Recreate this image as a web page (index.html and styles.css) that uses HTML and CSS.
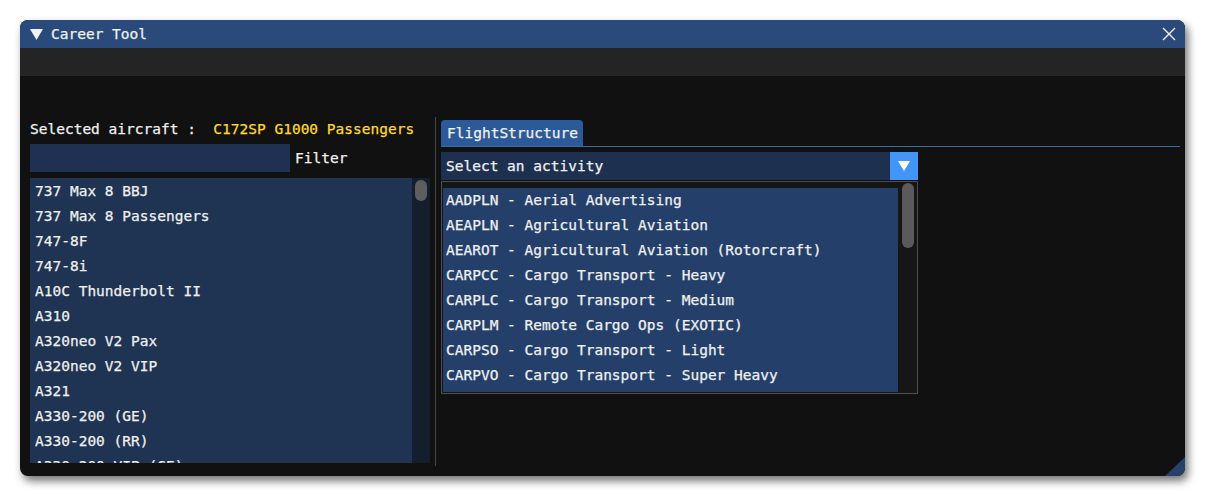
FILE: index.html
```html
<!DOCTYPE html>
<html lang="en">
  <head>
    <meta charset="UTF-8" />
    <title>Career Tool</title>
    <link rel="stylesheet" href="styles.css">
  </head>
  <body>
    <div class="window">
      <!-- Title bar -->
      <div class="titlebar">
        <svg class="collapse" width="13" height="11" viewBox="0 0 13 11"><polygon points="0,0 13,0 6.5,11" fill="#f2f2f2"/></svg>
        <span class="title">Career Tool</span>
        <svg class="close" width="14" height="14" viewBox="0 0 14 14"><path d="M1 1 L13 13 M13 1 L1 13" stroke="#f2f2f2" stroke-width="1.4" fill="none"/></svg>
      </div>
      <div class="menubar"></div>

      <div class="content">
        <!-- Aircraft selection -->
        <div class="left">
          <div class="selected">Selected aircraft :  <span class="value">C172SP G1000 Passengers</span></div>
          <div class="filter-row">
            <div class="filter-input"></div>
            <span class="filter-label">Filter</span>
          </div>
          <div class="aircraft-list">
            <div class="rows">
              <div class="row">737 Max 8 BBJ</div>
              <div class="row">737 Max 8 Passengers</div>
              <div class="row">747-8F</div>
              <div class="row">747-8i</div>
              <div class="row">A10C Thunderbolt II</div>
              <div class="row">A310</div>
              <div class="row">A320neo V2 Pax</div>
              <div class="row">A320neo V2 VIP</div>
              <div class="row">A321</div>
              <div class="row">A330-200 (GE)</div>
              <div class="row">A330-200 (RR)</div>
              <div class="row">A330-200 VIP (GE)</div>
            </div>
            <div class="scrollbar"><div class="thumb"></div></div>
          </div>
        </div>

        <div class="separator"></div>

        <!-- Flight structure -->
        <div class="right">
          <div class="tabbar">
            <div class="tab">FlightStructure</div>
          </div>
          <div class="combo">
            <span class="combo-text">Select an activity</span>
            <div class="combo-arrow">
              <svg width="12" height="10" viewBox="0 0 12 10"><polygon points="0,0 12,0 6,10" fill="#ffffff"/></svg>
            </div>
          </div>
          <div class="popup">
            <div class="popup-list">
              <div class="row">AADPLN - Aerial Advertising</div>
              <div class="row">AEAPLN - Agricultural Aviation</div>
              <div class="row">AEAROT - Agricultural Aviation (Rotorcraft)</div>
              <div class="row">CARPCC - Cargo Transport - Heavy</div>
              <div class="row">CARPLC - Cargo Transport - Medium</div>
              <div class="row">CARPLM - Remote Cargo Ops (EXOTIC)</div>
              <div class="row">CARPSO - Cargo Transport - Light</div>
              <div class="row">CARPVO - Cargo Transport - Super Heavy</div>
              <div class="row">CARROT - Cargo Transport (Rotorcraft)</div>
            </div>
            <div class="popup-scroll"><div class="thumb"></div></div>
          </div>
        </div>
      </div>

      <div class="grip"></div>
    </div>
  </body>
</html>
```

FILE: styles.css
```css
/* Page */
body {
  margin: 0;
  padding: 20px;
  background: #ffffff;
  font-family: "DejaVu Sans Mono", "Liberation Mono", monospace;
  font-size: 14.5px;
  color: #f0f0f0;
  -webkit-text-stroke: 0.25px;
}

/* Window frame */
.window {
  position: relative;
  width: 1165px;
  height: 456px;
  background: #111111;
  border-radius: 8px;
  overflow: hidden;
  display: flex;
  flex-direction: column;
  box-shadow: 3px 5px 8px rgba(0, 0, 0, 0.55);
}

.titlebar {
  height: 28px;
  background: #294a7a;
  display: flex;
  align-items: center;
  padding: 0 9px 0 10px;
}

.collapse {
  margin-right: 8px;
}

.title {
  flex: 1;
  white-space: pre;
}

.menubar {
  height: 28px;
  background: #242424;
}

/* Content */
.content {
  flex: 1;
  display: flex;
  padding: 41px 5px 13px 10px;
  min-height: 0;
}

.left {
  width: 400px;
  display: flex;
  flex-direction: column;
}

.selected {
  height: 24px;
  line-height: 24px;
  white-space: pre;
}

.value {
  color: #ffd92a;
}

.filter-row {
  margin-top: 3px;
  display: flex;
  align-items: center;
  height: 28px;
}

.filter-input {
  width: 260px;
  height: 28px;
  background: #1e3152;
}

.filter-label {
  margin-left: 5px;
}

.aircraft-list {
  margin-top: 6px;
  flex: 1;
  display: flex;
  background: #1f3352;
  overflow: hidden;
}

.rows {
  flex: 1;
  padding: 1px 0 0 5px;
}

.row {
  height: 25px;
  line-height: 25px;
  white-space: pre;
}

.scrollbar {
  width: 18px;
  background: #141e2c;
  padding: 2px 3px;
  box-sizing: border-box;
}

.scrollbar .thumb {
  height: 21px;
  background: #5e5e5e;
  border-radius: 6px;
}

.separator {
  width: 1px;
  margin: 0 5px -3px;
  background: #474747;
}

/* Right column */
.right {
  flex: 1;
  display: flex;
  flex-direction: column;
}

.tabbar {
  margin-top: 3px;
  border-bottom: 1px solid #3b6ba5;
  display: flex;
}

.tab {
  height: 26px;
  line-height: 26px;
  padding: 0 5px 0 6px;
  background: #2c5a98;
  border-radius: 4px 4px 0 0;
}

.combo {
  margin-top: 5px;
  width: 477px;
  height: 28px;
  display: flex;
  align-items: center;
  background: #1e3050;
}

.combo-text {
  flex: 1;
  padding-left: 5px;
}

.combo-arrow {
  width: 28px;
  height: 28px;
  background: #4296fa;
  display: flex;
  align-items: center;
  justify-content: center;
}

.popup {
  margin-top: 1px;
  width: 477px;
  height: 213px;
  box-sizing: border-box;
  border: 1px solid #4d4d4d;
  background: #161616;
  display: flex;
}

.popup-list {
  flex: 1;
  margin: 6px 0 1px 1px;
  padding-left: 3px;
  background: #24406a;
  overflow: hidden;
}

.popup-scroll {
  width: 19px;
  padding: 1px 3px 0 4px;
  box-sizing: border-box;
}

.popup-scroll .thumb {
  height: 65px;
  background: #5a5a5a;
  border-radius: 6px;
}

/* Resize grip in the corner */
.grip {
  position: absolute;
  right: 0;
  bottom: 0;
  width: 20px;
  height: 19px;
  background: #26426a;
  clip-path: polygon(100% 0, 100% 100%, 0 100%);
}
```
